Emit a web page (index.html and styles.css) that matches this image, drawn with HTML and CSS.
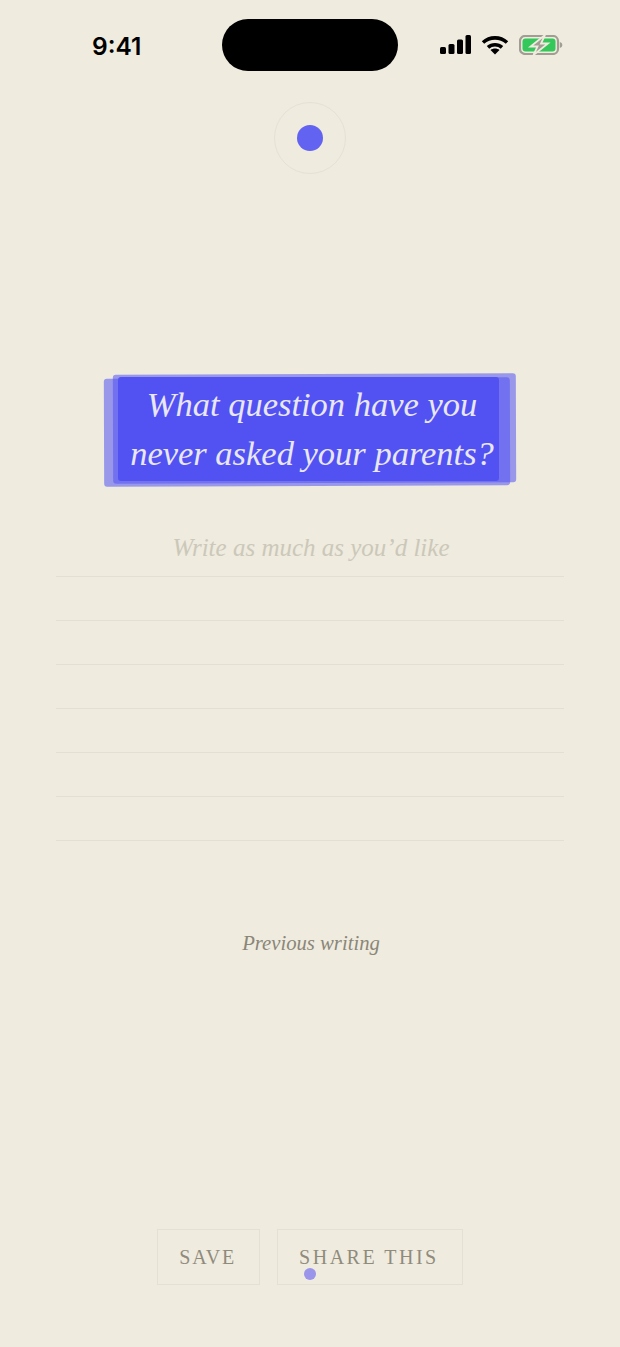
FILE: index.html
```html
<!DOCTYPE html>
<html lang="en">
<head>
  <meta charset="UTF-8">
  <meta name="viewport" content="width=device-width, initial-scale=1.0">
  <title>Daily question</title>
  <link rel="stylesheet" href="styles.css">
</head>
<body>
  <div class="screen">
    <header class="status-bar">
      <span class="time">9:41</span>
      <div class="island"></div>
      <div class="status-icons">
        <svg class="signal" width="31" height="20" viewBox="0 0 31 20">
          <rect x="0" y="12" width="6" height="7" rx="1.5"/>
          <rect x="8.5" y="9" width="6" height="10" rx="1.5"/>
          <rect x="17" y="4.5" width="6" height="14.5" rx="1.5"/>
          <rect x="25.500" y="0" width="5.500" height="19" rx="1.5"/>
        </svg>
        <svg class="wifi" width="28" height="20" viewBox="0 0 28 20">
          <path d="M2 7.500C8.800 1.300 19.200 1.300 26 7.500" fill="none" stroke="#000" stroke-width="3.600"/>
          <path d="M7 12.300C10.900 8.800 17.100 8.800 21 12.300" fill="none" stroke="#000" stroke-width="3.600"/>
          <path d="M14 19.500L9.500 15C12 13 16 13 18.500 15Z"/>
        </svg>
        <svg class="battery" width="44" height="20" viewBox="0 0 44 20">
          <rect x="1" y="1" width="38" height="18" rx="5" fill="none" stroke="#a09d92" stroke-width="2.200"/>
          <rect x="3.500" y="3.500" width="33" height="13" rx="3" fill="#34c759"/>
          <path d="M40.800 7v6c1.500-.4 2.500-1.500 2.500-3s-1-2.600-2.500-3z" fill="#a09d92"/>
          <path d="M26 0L11.500 11.500H18.500L14.500 20L29 8.500H22Z" fill="#a09d92" stroke="#efebdf" stroke-width="1.800"/>
        </svg>
      </div>
    </header>

    <div class="ring"><div class="ring-dot"></div></div>

    <main class="prompt">
      <h1 class="question">
        <span class="layer layer-left"></span>
        <span class="layer layer-right"></span>
        <span class="layer layer-main"></span>
        <span class="question-text">What question have you<br>never asked your parents?</span>
      </h1>

      <section class="writing">
        <div class="line placeholder">Write as much as you’d like</div>
        <div class="line"></div>
        <div class="line"></div>
        <div class="line"></div>
        <div class="line"></div>
        <div class="line"></div>
        <div class="line"></div>
      </section>

      <a class="previous">Previous writing</a>
    </main>

    <footer class="actions">
      <button class="action save">SAVE</button>
      <button class="action share">SHARE THIS<span class="touch-dot"></span></button>
    </footer>
  </div>
</body>
</html>
```

FILE: styles.css
```css
* {
  box-sizing: border-box;
}
body {
  margin: 0;
  background-color: #efebdf;
  font-family: "Liberation Serif", serif;
}
.screen {
  display: flex;
  flex-direction: column;
  align-items: center;
  height: 1347px;
  overflow: hidden;
}

/* status bar */
.status-bar {
  display: grid;
  grid-template-columns: 1fr 176px 1fr;
  align-items: center;
  width: 100%;
  padding: 19px 57px 0;
}
.time {
  padding: 1px 0 0 35px;
  font-family: Inter, sans-serif;
  font-size: 24.5px;
  font-weight: 600;
  color: #000;
}
.island {
  height: 52px;
  border-radius: 26px;
  background-color: #000;
}
.status-icons {
  display: flex;
  align-items: center;
  justify-content: flex-end;
  gap: 10px;
}
.status-icons svg {
  display: block;
}

/* ring */
.ring {
  display: flex;
  align-items: center;
  justify-content: center;
  width: 72px;
  height: 72px;
  margin-top: 31px;
  border: 1px solid #e5e1d5;
  border-radius: 50%;
}
.ring-dot {
  width: 26px;
  height: 26px;
  border-radius: 50%;
  background-color: #6363f1;
}

/* question */
.prompt {
  display: flex;
  flex-direction: column;
  align-items: center;
  width: 100%;
}
.question {
  position: relative;
  width: 381px;
  margin: 203px 0 0 -3px;
  padding: 3px 0 3px 7px;
  font-size: 34.500px;
  font-style: italic;
  font-weight: 400;
  line-height: 49px;
  text-align: center;
  color: #e9e7f6;
}
.question-text {
  position: relative;
  display: block;
  white-space: nowrap;
}
.layer {
  position: absolute;
  border-radius: 3px;
}
.layer-left {
  inset: 1px -11px -5px -14px;
  background-color: rgba(82, 82, 242, 0.55);
  transform: rotate(-0.2deg);
}
.layer-right {
  inset: -3px -17px -2px -5px;
  background-color: rgba(82, 82, 242, 0.55);
  transform: rotate(-0.2deg);
}
.layer-main {
  inset: 0;
  background-color: #5252f2;
}

/* writing lines */
.writing {
  width: 508px;
  margin-top: 52px;
}
.line {
  height: 44px;
  border-bottom: 1px solid #e3dfd2;
}
.placeholder {
  padding-left: 2px;
  font-size: 25px;
  font-style: italic;
  line-height: 30px;
  text-align: center;
  color: #cbc8b9;
}
.previous {
  margin: 89px 0 0 2px;
  font-size: 20.700px;
  font-style: italic;
  line-height: 26px;
  color: #8a8678;
}

/* buttons */
.actions {
  display: flex;
  gap: 17px;
  margin-top: auto;
  padding-bottom: 62px;
}
.action {
  position: relative;
  height: 56px;
  padding: 0 22px 0 21px;
  border: 1px solid #e4e0d3;
  background: none;
  font-family: "Liberation Serif", serif;
  font-size: 20px;
  letter-spacing: 2.5px;
  color: #8f8b7d;
}
.save {
  padding-right: 23px;
  letter-spacing: 1.8px;
}
.share {
  padding-right: 23px;
}
.touch-dot {
  position: absolute;
  left: 26px;
  top: 38px;
  width: 12px;
  height: 12px;
  border-radius: 50%;
  background-color: #9a94ea;
}
```
